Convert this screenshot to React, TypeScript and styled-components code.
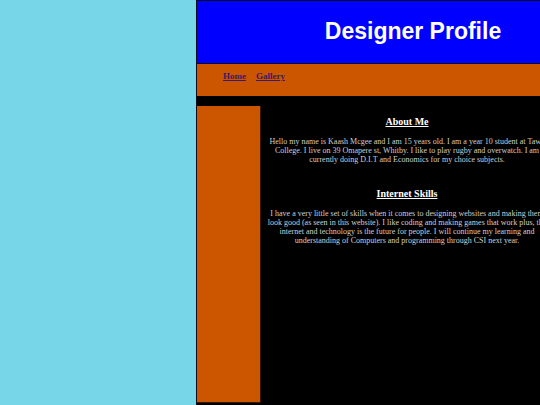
import styled, { createGlobalStyle } from "styled-components";

const GlobalStyle = createGlobalStyle`
    html, body {
        margin: 0;
        padding: 0;
        overflow: hidden;
        background: #77d6e8;
        font-family: "Liberation Serif", "Times New Roman", serif;
    }
`
const PageDiv = styled.div`
    margin-left: 196px;
    width: 432px;
    height: 405px;
    border: 1px solid #0a0a1a;
    border-right: none;
    background: #000;
    display: flex;
    flex-direction: column;
`
const HeaderDiv = styled.header`
    background: #0000ff;
    height: 62px;
    border-bottom: 1px solid #0a0a2a;
    display: flex;
    align-items: center;
    justify-content: center;
`
const Title = styled.h1`
    margin: 0 0 2px;
    color: #fff;
    font-family: "Liberation Sans", Arial, sans-serif;
    font-size: 23px;
    font-weight: bold;
`
const NavBar = styled.nav`
    background: #cc5500;
    height: 32px;
    box-sizing: border-box;
    display: flex;
    align-items: flex-start;
    gap: 10px;
    padding: 7px 0 0 26px;
`
const NavLink = styled.a`
    color: #3b1a6e;
    font-size: 9px;
    font-weight: bold;
    text-decoration: underline;
`
const BodyRow = styled.div`
    display: flex;
    padding-top: 10px;
    flex: 1;
`
const SideBar = styled.aside`
    width: 63px;
    height: 296px;
    background: #cc5500;
    border-right: 1px solid #3a1800;
    border-bottom: 1px solid #3a1800;
`
const Content = styled.main`
    width: 280px;
    padding: 0 6px;
    text-align: center;
`
const SectionTitle = styled.h2<{ $top: number }>`
    margin: ${p => p.$top}px 0 0;
    color: #fff;
    font-size: 10px;
    font-weight: bold;
    text-decoration: underline;
`
const Paragraph = styled.p`
    margin: 10px 0 0;
    color: #cfcfcf;
    font-size: 8px;
`

export default function App() {
    return (
        <>
            <GlobalStyle />
            <PageDiv>
                <HeaderDiv>
                    <Title>Designer Profile</Title>
                </HeaderDiv>
                <NavBar>
                    <NavLink href="#">Home</NavLink>
                    <NavLink href="#">Gallery</NavLink>
                </NavBar>
                <BodyRow>
                    <SideBar />
                    <Content>
                        <SectionTitle $top={10}>About Me</SectionTitle>
                        <Paragraph>
                            Hello my name is Kaash Mcgee and I am 15 years old. I am a year 10 student at Tawa
                            College. I live on 39 Omapere st, Whitby. I like to play rugby and overwatch. I am
                            currently doing D.I.T and Economics for my choice subjects.
                        </Paragraph>
                        <SectionTitle $top={24}>Internet Skills</SectionTitle>
                        <Paragraph>
                            I have a very little set of skills when it comes to designing websites and making them
                            look good (as seen in this website). I like coding and making games that work plus, the
                            internet and technology is the future for people. I will continue my learning and
                            understanding of Computers and programming through CSI next year.
                        </Paragraph>
                    </Content>
                </BodyRow>
            </PageDiv>
        </>
    )
}
